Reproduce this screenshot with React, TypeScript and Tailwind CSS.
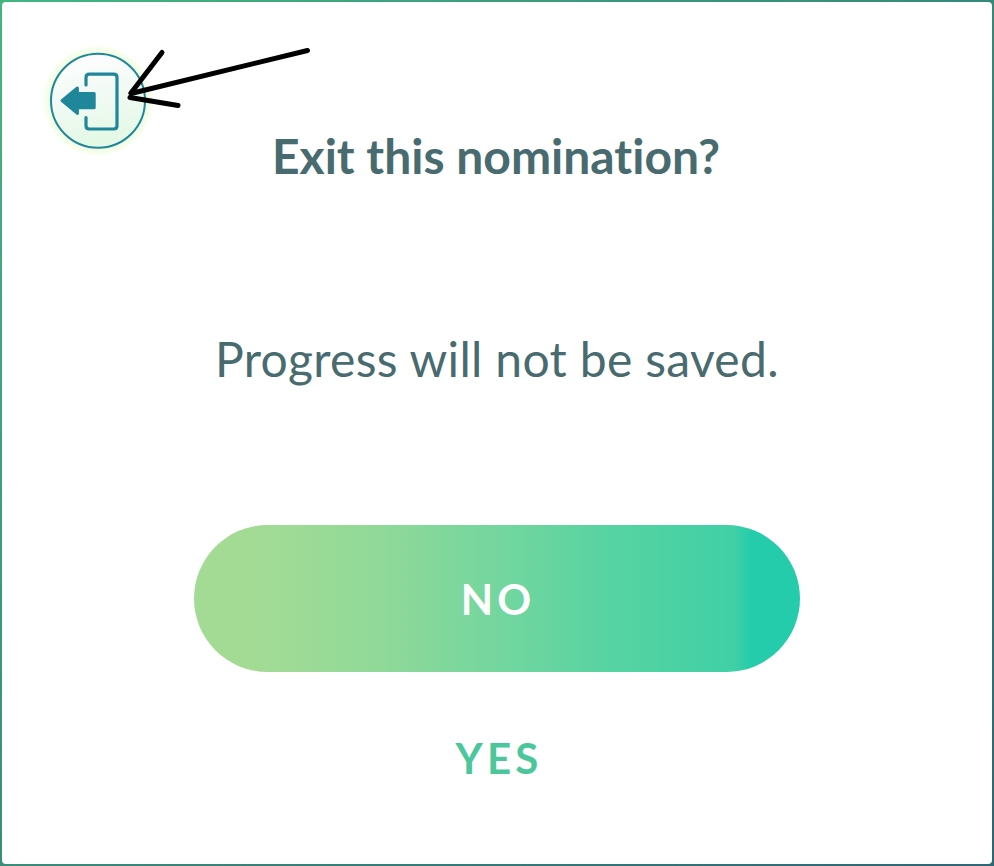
function ExitIcon() {
  return (
    <svg className="block h-[112px] w-[112px]" viewBox="42 45 112 112" fill="none" aria-hidden="true">
      <defs>
        <radialGradient id="halo">
          <stop offset="0.84" stopColor="#f0fde2" />
          <stop offset="0.94" stopColor="#f5feea" />
          <stop offset="1" stopColor="#ffffff" />
        </radialGradient>
        <linearGradient id="disc" x1="0" y1="0" x2="0.2" y2="1">
          <stop offset="0" stopColor="#ffffff" />
          <stop offset="0.45" stopColor="#f3faf6" />
          <stop offset="1" stopColor="#e4f9e6" />
        </linearGradient>
      </defs>
      <circle cx="98" cy="100.7" r="55.5" fill="url(#halo)" />
      <circle cx="98" cy="100.7" r="47" fill="url(#disc)" stroke="#1f8799" strokeWidth="2" />
      <path
        d="M86 85V77.5Q86 74.2 89.3 74.2H113.7Q117 74.2 117 77.5V125.7Q117 129 113.7 129H89.3Q86 129 86 125.7V117.5"
        stroke="#1f8799"
        strokeWidth="3.2"
        strokeLinecap="round"
      />
      <path
        d="M62 100.7L77.4 88V93.6H94.2V107.8H77.4V113.4Z"
        fill="#1f8799"
        stroke="#1f8799"
        strokeWidth="3"
        strokeLinejoin="round"
      />
    </svg>
  );
}

function PointerArrow() {
  return (
    <svg
      className="pointer-events-none absolute left-0 top-0"
      width="340"
      height="130"
      viewBox="0 0 340 130"
      fill="none"
      stroke="#000000"
      strokeWidth="5"
      strokeLinecap="round"
      strokeLinejoin="round"
      aria-hidden="true"
    >
      <path d="M307.5 50.5L131 93.5" />
      <path d="M162 52.5L131 93" />
      <path d="M130 97.5L178 105.5" />
    </svg>
  );
}

export default function App() {
  return (
    <main className="relative h-[866px] w-[994px] overflow-hidden bg-[linear-gradient(135deg,#43b581_0%,#368778_55%,#2f6674_100%)] p-0.5 font-['Lato',sans-serif] text-[#486b6f]">
      <section className="flex h-full w-full flex-col items-center rounded-[4px] bg-white">
        <header className="flex h-[203px] w-full flex-col items-center pt-[43px]">
          <button className="ml-10 self-start rounded-full" aria-label="Exit">
            <ExitIcon />
          </button>
          <h1 className="-mt-[25px] whitespace-nowrap pr-0.5 text-[48px] font-bold leading-[48px] [font-variant-ligatures:none]">
            Exit this nomination?
          </h1>
        </header>
        <p className="mt-[130px] whitespace-nowrap text-[48px] leading-[48px] tracking-[0.32px]">
          Progress will not be saved.
        </p>
        <button className="mr-px mt-[142px] flex h-[147px] w-[606px] shrink-0 items-center justify-center rounded-full bg-[linear-gradient(90deg,#a3db95_0%,#a3db95_11%,#91d998_30%,#74d69e_50%,#58d3a2_68%,#40d0a6_89%,#25ccab_92%,#25ccab_100%)] pl-[3px] text-[42px] font-bold leading-[42px] tracking-[4px] text-white">
          NO
        </button>
        <button className="mt-[65px] pl-1 text-[42px] font-bold leading-[42px] tracking-[4.2px] text-[#4bc79b]">YES</button>
      </section>
      <PointerArrow />
    </main>
  );
}
